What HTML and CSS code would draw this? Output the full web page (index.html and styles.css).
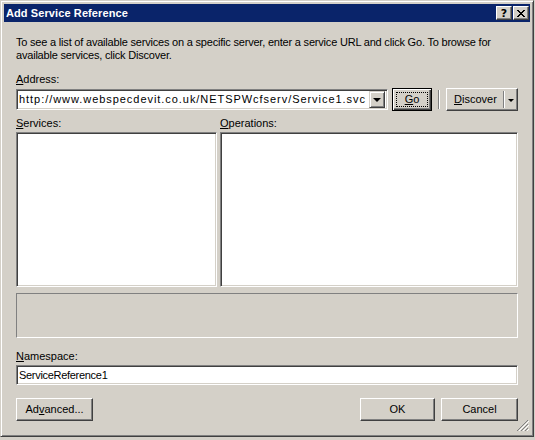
FILE: index.html
```html
<!DOCTYPE html>
<html>
<head>
<meta charset="utf-8">
<link rel="stylesheet" href="styles.css">
</head>
<body>
<div class="window">
  <div class="titlebar">
    <span class="title">Add Service Reference</span>
    <div class="caption-buttons">
      <div class="cap-btn help">?</div>
      <div class="cap-btn close">
        <svg width="8" height="7" viewBox="0 0 8 7" shape-rendering="crispEdges"><path d="M0 0h2v1h-2zM6 0h2v1h-2zM1 1h2v1h-2zM5 1h2v1h-2zM2 2h4v1h-4zM3 3h2v1h-2zM2 4h4v1h-4zM1 5h2v1h-2zM5 5h2v1h-2zM0 6h2v1h-2zM6 6h2v1h-2z" fill="#000"/></svg>
      </div>
    </div>
  </div>
  <div class="client">
    <p class="intro">To see a list of available services on a specific server, enter a service URL and click Go. To browse for<br>available services, click Discover.</p>
    <div class="label addr-label"><u>A</u>ddress:</div>
    <div class="address-row">
      <div class="combo">
        <span class="combo-text">http://www.webspecdevit.co.uk/NETSPWcfserv/Service1.svc</span>
        <div class="combo-btn"><span class="arrow"></span></div>
      </div>
      <div class="btn go"><span class="focus"><u>G</u>o</span></div>
      <div class="vsep"></div>
      <div class="btn discover">
        <span class="disc-text"><u>D</u>iscover</span>
        <span class="split"></span>
        <span class="disc-arrow"><span class="arrow"></span></span>
      </div>
    </div>
    <div class="lists">
      <div class="col services">
        <div class="label"><u>S</u>ervices:</div>
        <div class="listbox"></div>
      </div>
      <div class="col operations">
        <div class="label"><u>O</u>perations:</div>
        <div class="listbox"></div>
      </div>
    </div>
    <div class="status"></div>
    <div class="label ns-label"><u>N</u>amespace:</div>
    <div class="textbox">ServiceReference1</div>
    <div class="bottom-row">
      <div class="btn advanced">Ad<u>v</u>anced...</div>
      <div class="right-buttons">
        <div class="btn ok">OK</div>
        <div class="btn cancel">Cancel</div>
      </div>
    </div>
    <div class="grip">
      <svg width="12" height="12" viewBox="0 0 12 12" shape-rendering="crispEdges">
        <path d="M11 0L0 11M11 4L4 11M11 8L8 11" stroke="#808080" stroke-width="1.4"/>
        <path d="M11.5 1.5L1.5 11.5M11.5 5.5L5.5 11.5M11.5 9.5L9.5 11.5" stroke="#fff" stroke-width="1"/>
      </svg>
    </div>
  </div>
</div>
</body>
</html>
```

FILE: styles.css
```css
* { box-sizing: border-box; }
html, body {
  margin: 0;
  padding: 0;
  background: #d4d0c8;
  width: 535px;
  height: 440px;
  overflow: hidden;
}
body {
  font-family: "Liberation Sans", Arial, sans-serif;
  font-size: 11px;
  color: #000;
}
.window {
  width: 534px;
  height: 437px;
  background: #d4d0c8;
  border: 1px solid;
  border-color: #d4d0c8 #404040 #404040 #d4d0c8;
  box-shadow: inset 1px 1px #ffffff, inset -1px -1px #808080;
  padding: 3px;
  display: flex;
  flex-direction: column;
}
.titlebar {
  height: 18px;
  background: #0a246a;
  display: flex;
  align-items: center;
  justify-content: space-between;
  padding: 0 1px 0 2px;
  flex: none;
}
.title {
  color: #fff;
  font-weight: bold;
  font-size: 11px;
  font-family: "Liberation Sans", Arial, sans-serif;
  letter-spacing: 0.1px;
}
.caption-buttons {
  display: flex;
  gap: 1px;
}
.cap-btn {
  width: 16px;
  height: 14px;
  background: #d4d0c8;
  border: 1px solid;
  border-color: #fff #404040 #404040 #fff;
  box-shadow: inset -1px -1px #808080;
  display: flex;
  align-items: center;
  justify-content: center;
}
.help {
  font-weight: bold;
  font-size: 11px;
  line-height: 11px;
  font-family: "DejaVu Sans", sans-serif;
}
.client {
  position: relative;
  flex: 1;
  padding: 14px 12px 0 12px;
}
.intro {
  margin: 0;
  line-height: 13px;
  white-space: nowrap;
  letter-spacing: -0.2px;
}
.label {
  line-height: 13px;
  height: 13px;
}
.addr-label { margin-top: 11px; }
.address-row {
  display: flex;
  align-items: center;
  margin-top: 2px;
  height: 23px;
}
.combo {
  width: 372px;
  height: 21px;
  background: #fff;
  border: 1px solid;
  border-color: #808080 #fff #fff #808080;
  box-shadow: inset 1px 1px #404040, inset -1px -1px #d4d0c8;
  display: flex;
  align-items: center;
  padding: 2px;
}
.combo-text {
  flex: 1;
  padding-left: 0;
  line-height: 15px;
  white-space: nowrap;
  overflow: hidden;
  letter-spacing: 0.95px;
}
.combo-btn {
  width: 16px;
  height: 17px;
  background: #d4d0c8;
  border: 1px solid;
  border-color: #d4d0c8 #404040 #404040 #d4d0c8;
  box-shadow: inset 1px 1px #fff, inset -1px -1px #808080;
  display: flex;
  align-items: center;
  justify-content: center;
}
.arrow {
  width: 0;
  height: 0;
  border-left: 4px solid transparent;
  border-right: 4px solid transparent;
  border-top: 4px solid #000;
  margin-top: 1px;
}
.btn {
  background: #d4d0c8;
  border: 1px solid;
  border-color: #fff #404040 #404040 #fff;
  box-shadow: inset -1px -1px #808080;
  height: 23px;
  display: flex;
  align-items: center;
  justify-content: center;
  line-height: 13px;
}
.go {
  margin-left: 4px;
  width: 40px;
  border: 1px solid #000;
  box-shadow: inset 1px 1px #fff, inset -1px -1px #404040, inset -2px -2px #808080;
  padding: 3px;
}
.go .focus {
  width: 100%;
  height: 100%;
  border: 1px dotted #000;
  display: flex;
  align-items: center;
  justify-content: center;
}
.vsep {
  width: 2px;
  height: 19px;
  margin-left: 6px;
  border-left: 1px solid #808080;
  border-right: 1px solid #fff;
}
.discover {
  margin-left: 6px;
  width: 72px;
  justify-content: flex-start;
  padding-left: 7px;
}
.disc-text { flex: 1; }
.split {
  width: 2px;
  height: 17px;
  border-left: 1px solid #808080;
  border-right: 1px solid #fff;
}
.disc-arrow {
  width: 12px;
  display: flex;
  justify-content: center;
}
.disc-arrow .arrow {
  border-left-width: 3px;
  border-right-width: 3px;
  border-top-width: 3px;
}
.lists {
  display: flex;
  gap: 3px;
  margin-top: 6px;
}
.col { display: flex; flex-direction: column; }
.services { width: 201px; }
.operations { flex: 1; }
.lists .label { margin-bottom: 2px; }
.listbox {
  height: 155px;
  background: #fff;
  border: 1px solid;
  border-color: #808080 #fff #fff #808080;
  box-shadow: inset 1px 1px #404040, inset -1px -1px #d4d0c8;
}
.status {
  margin-top: 6px;
  height: 45px;
  border: 1px solid;
  border-color: #808080 #fff #fff #808080;
}
.ns-label { margin-top: 12px; }
.textbox {
  margin-top: 2px;
  height: 20px;
  background: #fff;
  border: 1px solid;
  border-color: #808080 #fff #fff #808080;
  box-shadow: inset 1px 1px #404040, inset -1px -1px #d4d0c8;
  padding: 0 2px;
  line-height: 18px;
  letter-spacing: -0.3px;
}
.bottom-row {
  display: flex;
  justify-content: space-between;
  margin-top: 13px;
}
.advanced { width: 77px; }
.right-buttons { display: flex; gap: 6px; }
.ok { width: 75px; }
.cancel { width: 77px; }
.grip {
  position: absolute;
  right: 1px;
  bottom: 1px;
  width: 12px;
  height: 12px;
}
.grip svg { display: block; }
```
